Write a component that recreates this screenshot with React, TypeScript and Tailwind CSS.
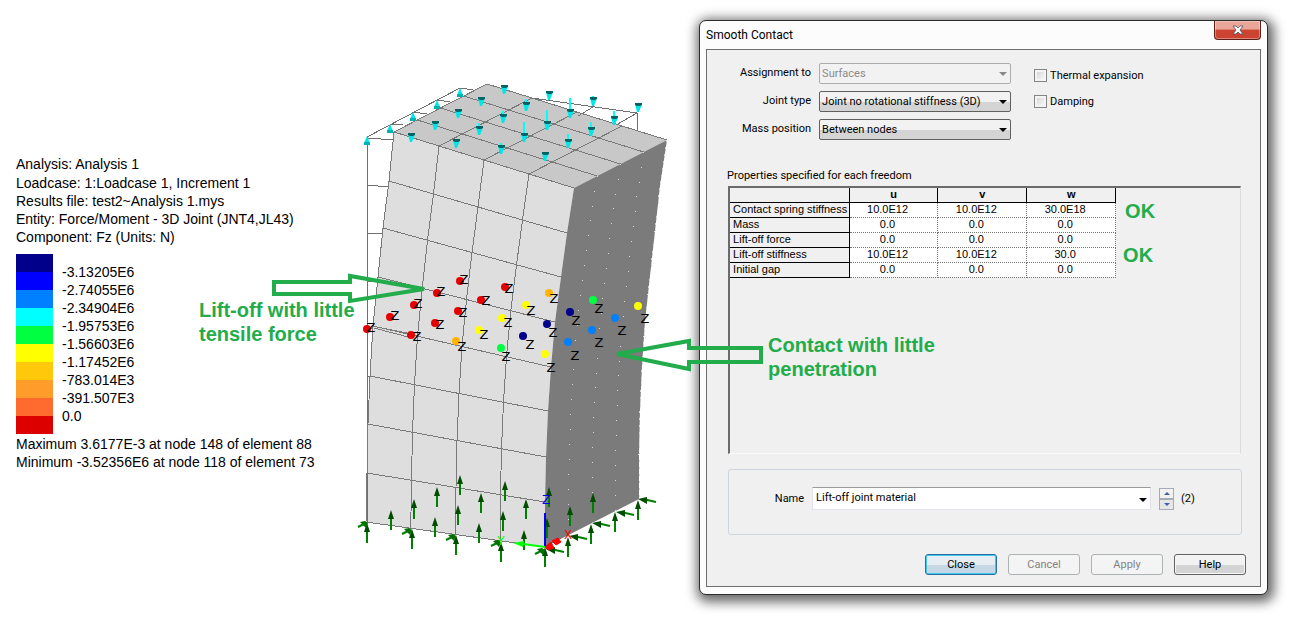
import { useState } from 'react'
import type { ReactNode } from 'react'

type Point = [number, number]

const legend = [
  { color: 'bg-[#00008b]', label: '-3.13205E6' },
  { color: 'bg-[#0000ff]', label: '-2.74055E6' },
  { color: 'bg-[#0080ff]', label: '-2.34904E6' },
  { color: 'bg-[#00ffff]', label: '-1.95753E6' },
  { color: 'bg-[#00ff40]', label: '-1.56603E6' },
  { color: 'bg-[#ffff00]', label: '-1.17452E6' },
  { color: 'bg-[#ffc80a]', label: '-783.014E3' },
  { color: 'bg-[#ff9c2a]', label: '-391.507E3' },
  { color: 'bg-[#ff6a2e]', label: '0.0' },
  { color: 'bg-[#dc0000]', label: '' },
]

const properties = [
  { name: 'Contact spring stiffness', values: ['10.0E12', '10.0E12', '30.0E18'] },
  { name: 'Mass', values: ['0.0', '0.0', '0.0'] },
  { name: 'Lift-off force', values: ['0.0', '0.0', '0.0'] },
  { name: 'Lift-off stiffness', values: ['10.0E12', '10.0E12', '30.0'] },
  { name: 'Initial gap', values: ['0.0', '0.0', '0.0'] },
]

// Vertical edges of the deformed block, one point per mesh row
const leftEdge: Point[] = [[394, 132], [389, 181], [383, 228], [378, 277], [373, 326], [370, 376], [368, 424], [367, 473], [366, 522]]
const frontEdge: Point[] = [[574, 188], [567, 233], [561, 277], [555, 322], [551, 367], [548, 411], [546, 457], [545, 502], [545, 547]]
const rightEdge: Point[] = [[667, 140], [660, 186], [655, 231], [650, 276], [645, 321], [642, 366], [640, 410], [639, 455], [639, 499]]
const back: Point = [487, 84]

const quarters = [0.25, 0.5, 0.75]

const mix = (a: Point, b: Point, t: number): Point => [a[0] + (b[0] - a[0]) * t, a[1] + (b[1] - a[1]) * t]
const toPoints = (points: Point[]) => points.map((p) => p.join(',')).join(' ')

// x, y, tail length
const loads: [number, number, number][] = [
  [504, 89, 4], [481, 101, 4], [458, 113, 3], [435, 125, 3], [411, 137, 4],
  [549, 95, 2], [526, 106, 7], [503, 118, 7], [479, 130, 7], [456, 143, 3],
  [570, 113, 15], [547, 125, 15], [524, 137, 15], [501, 149, 6],
  [593, 101, 5], [614, 120, 9], [591, 131, 9], [568, 143, 9], [545, 156, 4], [638, 107, 4],
]

const edgeLoads: Point[] = [[460, 93], [437, 105], [413, 117], [390, 129], [367, 141]]

// Tips of the vertical supports
const supports: Point[] = [
  [460, 475], [437, 487], [414, 499], [391, 510], [505, 481], [481, 493], [458, 505], [435, 517],
  [526, 499], [503, 511], [479, 523], [524, 530], [549, 487], [547, 518], [570, 506], [593, 493],
  [367, 523], [412, 529], [456, 535], [501, 542], [545, 547], [568, 537], [591, 524], [615, 512], [638, 500],
]

const sideSupports: Point[] = [[638, 499], [616, 512], [592, 523], [569, 536], [546, 549]]
const cornerSupports: Point[] = [[364, 524], [408, 531], [452, 537], [497, 543], [541, 551]]

// Nodal results: dot x, y, colour, then the centre of the axis letter
const nodes: [number, number, string, number, number][] = [
  [460, 281, '#e60000', 464, 279],
  [437, 293, '#e60000', 441, 291],
  [414, 305, '#e60000', 418, 303],
  [390, 317, '#e60000', 395, 315],
  [367, 329, '#e60000', 371, 327],
  [505, 287, '#e60000', 509, 288],
  [481, 300, '#e60000', 486, 300],
  [458, 311, '#e60000', 463, 312],
  [435, 323, '#e60000', 440, 324],
  [411, 335, '#e60000', 417, 336],
  [549, 293, '#ffb400', 554, 298],
  [456, 341, '#ffb400', 462, 346],
  [526, 305, '#ffff00', 531, 310],
  [502, 318, '#ffff00', 508, 322],
  [479, 330, '#ffff00', 484, 334],
  [545, 354, '#ffff00', 551, 367],
  [638, 306, '#ffff00', 645, 318],
  [593, 300, '#00ff40', 599, 308],
  [501, 348, '#00ff40', 506, 356],
  [570, 312, '#00008b', 576, 320],
  [547, 324, '#00008b', 553, 332],
  [523, 336, '#00008b', 530, 344],
  [615, 318, '#0080ff', 622, 330],
  [592, 330, '#0080ff', 599, 342],
  [568, 342, '#0080ff', 575, 355],
]

function Model() {
  const topLeft = leftEdge[0]
  const topFront = frontEdge[0]
  const topRight = rightEdge[0]

  return (
    <svg
      viewBox="350 70 330 510"
      className="mt-[70px] h-[510px] w-[330px] shrink-0"
      role="img"
      aria-label="Deformed mesh with contact forces"
    >
      {/* Faces */}
      <polygon points={toPoints([...leftEdge, ...[...frontEdge].reverse()])} fill="#dedede" />
      <polygon points={toPoints([topLeft, back, topRight, topFront])} fill="#c8c8c8" />
      <polygon points={toPoints([...frontEdge, ...[...rightEdge].reverse()])} fill="#7b7b7b" />

      {/* Undeformed outline */}
      <g stroke="#6f6f6f" fill="none" shapeRendering="crispEdges">
        <path d="M367 522V137L460 88l13 2M367 138l27 2M390 124l13 1M413 112l14 2M437 100l13 2" />
        <path d="M367 185l21 2M367 233l15 1M367 281l10 1M367 328l6 1M367 376h3" />
        <path d="M532 98L637 113v18M637 113l-21 12M593 107l-15 9" />
      </g>

      {/* Mesh */}
      <g stroke="#7a7a7a" fill="none" shapeRendering="crispEdges">
        <polyline points={toPoints(leftEdge)} />
        {leftEdge.map((p, i) => (
          <polyline key={i} points={toPoints([p, frontEdge[i]])} />
        ))}
        {quarters.map((t) => (
          <polyline key={t} points={toPoints(leftEdge.map((p, i) => mix(p, frontEdge[i], t)))} />
        ))}
        {quarters.map((t) => (
          <g key={t}>
            <polyline points={toPoints([mix(topLeft, back, t), mix(topFront, topRight, t)])} />
            <polyline points={toPoints([mix(topLeft, topFront, t), mix(back, topRight, t)])} />
          </g>
        ))}
        <polyline points={toPoints([topLeft, back, topRight])} />
        <path d="M372 326l40 8M374 328l38 10" />
      </g>
      <g stroke="#d8d8d8" fill="none" strokeDasharray="1 14" shapeRendering="crispEdges">
        {quarters.map((t) => (
          <polyline key={t} points={toPoints(frontEdge.map((p, i) => mix(p, rightEdge[i], t)))} />
        ))}
        <polyline points={toPoints(rightEdge)} strokeDasharray="2 5" />
      </g>

      {/* Applied displacement */}
      {loads.map(([x, y, tail]) => (
        <g key={`${x}-${y}`}>
          <path d={`M${x} ${y - tail}V${y + 5}`} stroke="#00ffff" strokeWidth="2" />
          <path d={`M${x - 3} ${y - 3}h7l-3 8h-2z`} fill="#00e6e6" />
          <path d={`M${x - 3} ${y - 4}h7v2l-2 1h-3l-2-1z`} fill="#006464" />
        </g>
      ))}
      {edgeLoads.map(([x, y]) => (
        <g key={x}>
          <path d={`M${x} ${y - 5}l3 7h-6z`} fill="#00e6e6" />
          <path d={`M${x - 3} ${y + 1}h6v3h-6z`} fill="#00b4b4" />
        </g>
      ))}

      {/* Supports */}
      {supports.map(([x, y]) => (
        <g key={`${x}-${y}`}>
          <path d={`M${x} ${y + 4}v16`} stroke="#008000" strokeWidth="2" />
          <path d={`M${x} ${y}l3 9h-6z`} fill="#004d00" />
        </g>
      ))}
      {sideSupports.map(([x, y]) => (
        <g key={x}>
          <path d={`M${x + 5} ${y}l13 3`} stroke="#008000" strokeWidth="2" />
          <path d={`M${x} ${y}l9-2v7z`} fill="#004d00" />
        </g>
      ))}
      {cornerSupports.map(([x, y]) => (
        <g key={x}>
          <path d={`M${x - 6} ${y + 3}l6-3`} stroke="#008000" strokeWidth="2" />
          <path d={`M${x - 4} ${y - 2}l5-1 3 2-2 5-3-3z`} fill="#007000" />
        </g>
      ))}

      {/* Nodal forces */}
      <g fontFamily="DejaVu Sans, sans-serif" fontSize="13" textAnchor="middle">
        {nodes.map(([x, y, color, tx, ty]) => (
          <g key={`${x}-${y}`}>
            <circle cx={x} cy={y} r="4" fill={color} />
            <text x={tx} y={ty + 5}>Z</text>
          </g>
        ))}
      </g>

      {/* Axes */}
      <path d="M545 513v34" stroke="#0000ff" strokeWidth="2" />
      <path d="M545 547l-22-3" stroke="#00ff00" strokeWidth="2" />
      <path d="M513 543l11-2-1 6z" fill="#00ff00" />
      <path d="M545 547l6-5 3 6-6 2zM552 541l6-3 3 4-5 3z" fill="#ff0000" stroke="#ff0000" />
      <g fontFamily="DejaVu Sans, sans-serif" fontSize="12" textAnchor="middle">
        <text x="546" y="504" fill="#0000ff">Z</text>
        <text x="501" y="545" fill="#00ff00">Y</text>
        <text x="568" y="539" fill="#ff0000">X</text>
      </g>
    </svg>
  )
}

function ResultsLegend() {
  return (
    <div className="w-[350px] shrink-0 pt-[155px] pl-4 text-[14px] leading-[18px] whitespace-nowrap text-black">
      <p className="pb-px">Analysis: Analysis 1</p>
      <p>Loadcase: 1:Loadcase 1, Increment 1</p>
      <p>Results file: test2~Analysis 1.mys</p>
      <p>Entity: Force/Moment - 3D Joint (JNT4,JL43)</p>
      <p>Component: Fz (Units: N)</p>
      <ul className="mt-2">
        {legend.map((item) => (
          <li key={item.color} className="flex h-[18px] gap-[9px]">
            <span className={`w-[37px] ${item.color}`} />
            <span className="pt-[9px]">{item.label}</span>
          </li>
        ))}
      </ul>
      <p className="mt-px">Maximum 3.6177E-3 at node 148 of element 88</p>
      <p>Minimum -3.52356E6 at node 118 of element 73</p>
    </div>
  )
}

function DropArrow({ className }: { className: string }) {
  return (
    <svg viewBox="0 0 8 4" className={`pointer-events-none absolute h-1 w-2 fill-current ${className}`} aria-hidden="true">
      <path d="M0 0h8L4 4z" />
    </svg>
  )
}

function SelectRow({ id, label, value, disabled = false }: { id: string; label: string; value: string; disabled?: boolean }) {
  return (
    <>
      <label htmlFor={id} className="text-right">{label}</label>
      <div className={`relative ${disabled ? 'text-[#8a8a8a]' : 'text-black'}`}>
        <select
          id={id}
          disabled={disabled}
          className="block h-[21px] w-full appearance-none rounded-[2px] border border-[#606060] bg-linear-to-b from-[#f2f2f2] from-50% to-[#d4d4d4] to-50% pt-px pl-[2px] opacity-100 disabled:border-[#adadad] disabled:bg-[#f2f2f2] disabled:bg-none"
        >
          <option>{value}</option>
        </select>
        <DropArrow className="top-[9px] right-1" />
      </div>
    </>
  )
}

function CheckRow({ label }: { label: string }) {
  return (
    <label className="flex items-center gap-[3px] leading-[13px]">
      <input
        type="checkbox"
        className="size-[13px] appearance-none border border-[#858585] bg-linear-to-br from-[#cfcfcf] to-white shadow-[inset_0_0_0_2px_#f4f4f4] checked:bg-[#3a6ea5]"
      />
      {label}
    </label>
  )
}

function DialogButton({ children, disabled = false, primary = false }: { children: ReactNode; disabled?: boolean; primary?: boolean }) {
  const look = primary
    ? 'border-[#2a6fa0] bg-linear-to-b from-[#e6eef4] from-50% to-[#c6d8e6] to-50% shadow-[inset_0_0_0_1px_#40c8f0]'
    : disabled
      ? 'border-[#adb2b5] bg-[#f4f4f4] text-[#838383]'
      : 'border-[#606060] bg-linear-to-b from-[#f2f2f2] from-50% to-[#d4d4d4] to-50% shadow-[inset_0_0_0_1px_#f8f8f8]'

  return (
    <button type="button" disabled={disabled} className={`h-[21px] w-[72px] rounded-[3px] border pt-px ${look}`}>
      {children}
    </button>
  )
}

function PropertyTable() {
  return (
    <table className="w-[386px] table-fixed border-collapse font-['Liberation_Sans',sans-serif] text-[11px] leading-[13px]">
      <colgroup>
        <col className="w-[119px]" />
        <col />
        <col />
        <col />
      </colgroup>
      <thead>
        <tr className="h-[14px]">
          <td className="border-r border-b border-black p-0" />
          {['u', 'v', 'w'].map((axis) => (
            <th key={axis} scope="col" className="border-r border-b border-black p-0">{axis}</th>
          ))}
        </tr>
      </thead>
      <tbody>
        {properties.map((row) => (
          <tr key={row.name} className="h-[15px]">
            <th scope="row" className="border-r border-b border-black p-0 pl-[3px] text-left font-normal whitespace-nowrap">
              {row.name}
            </th>
            {row.values.map((value, i) => (
              <td key={i} className="border-r border-b border-dotted border-r-[#777] border-b-[#777] bg-white p-0 pr-3 text-center">
                {value}
              </td>
            ))}
          </tr>
        ))}
      </tbody>
    </table>
  )
}

function NameField() {
  const [name, setName] = useState('Lift-off joint material')
  const [count, setCount] = useState(2)

  return (
    <fieldset className="mt-[15px] mr-[18px] ml-[21px] flex items-center rounded-[3px] border border-[#cdd6de] pt-[17px] pb-6">
      <label htmlFor="name" className="w-[83px] pt-px pr-2 text-right">Name</label>
      <div className="relative flex-1">
        <input
          id="name"
          type="text"
          value={name}
          onChange={(e) => setName(e.target.value)}
          className="block h-[23px] w-full border border-t-[#9a9a9a] border-r-[#e2e3ea] border-b-[#e2e3ea] border-l-[#e2e3ea] bg-white pr-5 pb-[2px] pl-[3px] outline-none"
        />
        <DropArrow className="top-[11px] right-1" />
      </div>
      <div className="ml-2 flex w-[15px] flex-col">
        <button
          type="button"
          aria-label="Increase"
          onClick={() => setCount(count + 1)}
          className="flex h-[11px] items-center justify-center border border-[#a5acb5] bg-[#f2f2f2]"
        >
          <svg viewBox="0 0 6 3" className="h-[3px] w-[6px] fill-[#3f5fa8]"><path d="M0 3h6L3 0z" /></svg>
        </button>
        <button
          type="button"
          aria-label="Decrease"
          onClick={() => setCount(count - 1)}
          className="flex h-[11px] items-center justify-center border border-[#a5acb5] bg-[#e6e6e6]"
        >
          <svg viewBox="0 0 6 3" className="h-[3px] w-[6px] fill-[#3f5fa8]"><path d="M0 0h6L3 3z" /></svg>
        </button>
      </div>
      <span className="w-[67px] pt-px pl-[7px]">({count})</span>
    </fieldset>
  )
}

function ContactDialog() {
  return (
    <section
      role="dialog"
      aria-label="Smooth Contact"
      className="relative mt-5 mr-[25px] w-[44%] shrink-0 self-start rounded-[7px] border border-[#2c2c2c] bg-[#fcfcfc] px-[6px] pb-[7px] font-['Roboto',sans-serif] text-[11px] text-black shadow-[2px_3px_12px_4px_rgba(0,0,0,0.6)]"
    >
      <header className="flex h-7 items-start justify-between">
        <h1 className="pt-[5px] text-[12px] leading-[18px]">Smooth Contact</h1>
        <button
          type="button"
          aria-label="Close dialog"
          className="flex h-[19px] w-[47px] items-center justify-center rounded-b-[4px] border border-t-0 border-[#5a1f1a] bg-linear-to-b from-[#e8a598] from-45% to-[#cc4430] to-50% shadow-[inset_0_0_0_1px_rgba(255,255,255,0.35)]"
        >
          <svg viewBox="0 0 12 10" className="h-[10px] w-3">
            <path d="M1 1h3l2 2 2-2h3L8 5l3 4H8L6 7 4 9H1l3-4z" fill="#ffffff" stroke="#4d4f63" strokeWidth="0.800" />
          </svg>
        </button>
      </header>

      <div className="border border-[#6e6e6e] bg-[#f0f0f0] pt-[13px] pb-[11px]">
        <div className="flex items-start">
          <div className="grid grid-cols-[104px_192px] items-center gap-x-2 gap-y-[7px]">
            <SelectRow id="assignment" label="Assignment to" value="Surfaces" disabled />
            <SelectRow id="joint" label="Joint type" value="Joint no rotational stiffness (3D)" />
            <SelectRow id="mass" label="Mass position" value="Between nodes" />
          </div>
          <div className="ml-[23px] flex flex-col gap-[13px] pt-[6px]">
            <CheckRow label="Thermal expansion" />
            <CheckRow label="Damping" />
          </div>
        </div>

        <p className="mt-7 pl-5 leading-[16px]">Properties specified for each freedom</p>
        <div className="mt-[2px] mr-[19px] ml-[21px] min-h-[268px] border-t-2 border-r border-b border-l-2 border-t-[#6b6b6b] border-r-[#dcdcdc] border-b-[#fafafa] border-l-[#6b6b6b]">
          <PropertyTable />
        </div>

        <NameField />

        <div className="mt-[19px] flex justify-end gap-[11px] pr-[14px]">
          <DialogButton primary>Close</DialogButton>
          <DialogButton disabled>Cancel</DialogButton>
          <DialogButton disabled>Apply</DialogButton>
          <DialogButton>Help</DialogButton>
        </div>
      </div>

      {/* Notes drawn over the dialog */}
      <div className="pointer-events-none absolute top-0 left-0 font-['Liberation_Sans',sans-serif] text-[20px] leading-6 font-bold whitespace-nowrap text-[#22ac4b]">
        <span className="absolute top-[178px] left-[425px]">OK</span>
        <span className="absolute top-[222px] left-[423px]">OK</span>
        <p className="absolute top-[312px] left-[68px]">
          Contact with little
          <br />
          penetration
        </p>
        <svg viewBox="612 336 154 38" className="absolute top-[315px] left-[-88px] h-[38px] w-[154px] fill-none stroke-[#22ac4b] stroke-4">
          <path d="M617 354l72-13v7h72v14h-72v7z" />
        </svg>
      </div>
    </section>
  )
}

export default function App() {
  return (
    <main className="flex min-h-screen overflow-hidden bg-white font-['Liberation_Sans',sans-serif]">
      <div className="relative flex min-w-0 flex-1 items-start">
        <ResultsLegend />
        <Model />
        <p className="absolute top-[298px] left-[199px] text-[20px] leading-6 font-bold whitespace-nowrap text-[#22ac4b]">
          Lift-off with little
          <br />
          tensile force
        </p>
        <svg viewBox="270 272 160 34" className="absolute top-[272px] left-[270px] h-[34px] w-[160px] fill-none stroke-[#22ac4b] stroke-4">
          <path d="M274 282h76v-6l74 13-74 12v-7h-76z" />
        </svg>
      </div>
      <ContactDialog />
    </main>
  )
}
